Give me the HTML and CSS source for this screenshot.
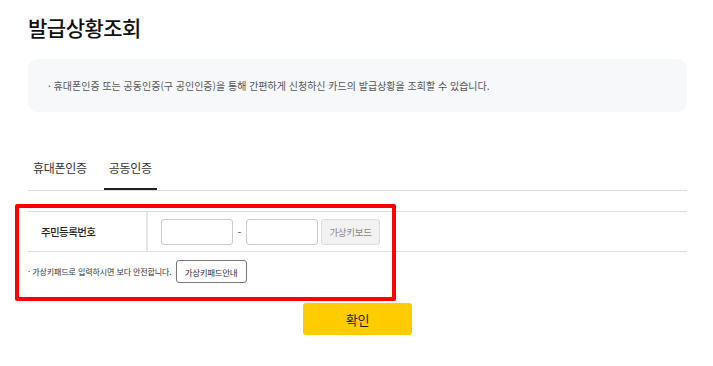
FILE: index.html
```html
<!DOCTYPE html>
<html lang="ko">
<head>
  <meta charset="UTF-8" />
  <meta name="viewport" content="width=device-width, initial-scale=1" />
  <title>발급상황조회</title>
  <link rel="stylesheet" href="styles.css">
</head>
<body>

  <main class="page">
    <h1 class="page-title">발급상황조회</h1>

    <div class="notice">
      <p>· 휴대폰인증 또는 공동인증(구 공인인증)을 통해 간편하게 신청하신 카드의 발급상황을 조회할 수 있습니다.</p>
    </div>

    <nav class="tabs">
      <a class="tab" href="#">휴대폰인증</a>
      <a class="tab active" href="#">공동인증</a>
    </nav>

    <!-- resident number form, marked with the red box -->
    <section class="cert-form">
      <div class="form-row">
        <div class="form-label">주민등록번호</div>
        <div class="form-field">
          <input class="num-input" type="text" aria-label="주민등록번호 앞자리" />
          <span class="dash">-</span>
          <input class="num-input" type="password" aria-label="주민등록번호 뒷자리" />
          <button class="keyboard-btn" type="button">가상키보드</button>
        </div>
      </div>
      <div class="hint-row">
        <span class="hint">· 가상키패드로 입력하시면 보다 안전합니다.</span>
        <button class="guide-btn" type="button">가상키패드안내</button>
      </div>
      <div class="highlight"></div>
    </section>

    <div class="actions">
      <button class="confirm-btn" type="button">확인</button>
    </div>
  </main>

</body>
</html>
```

FILE: styles.css
```css
body {
  margin: 0;
  background: #fff;
  color: #222;
  font-family: "Noto Sans CJK KR", "Noto Sans", sans-serif;
}

.page {
  padding: 13px 26px 0 28px;
}

.page-title {
  margin: 0;
  font-size: 21px;
  font-weight: 500;
  letter-spacing: -0.5px;
  line-height: 28px;
  color: #111;
}

.notice {
  margin-top: 18px;
  height: 53px;
  background: #f7f8fa;
  border-radius: 9px;
  display: flex;
  align-items: center;
  padding: 0 20px;
}

.notice p {
  margin: 0;
  font-size: 10px;
  color: #555;
  letter-spacing: 0;
}

.tabs {
  margin-top: 43px;
  display: flex;
  gap: 12px;
  border-bottom: 1px solid #ddd;
}

.tab {
  display: block;
  padding: 4px 5px 12px;
  font-size: 12px;
  letter-spacing: -0.3px;
  color: #333;
  text-decoration: none;
  border-bottom: 2px solid transparent;
}

.tab.active {
  border-bottom-color: #222;
}

/* form block */
.cert-form {
  position: relative;
  margin-top: 20px;
  border-top: 1px solid #ddd;
}

.form-row {
  display: flex;
  height: 39px;
  border-bottom: 1px solid #ddd;
}

.form-label {
  width: 105px;
  padding-left: 13px;
  border-right: 2px solid #e6e6e6;
  display: flex;
  align-items: center;
  font-size: 10.5px;
  font-weight: 500;
  letter-spacing: -0.6px;
  color: #222;
}

.form-field {
  display: flex;
  align-items: center;
  padding-left: 13px;
}

.num-input {
  width: 72px;
  height: 26px;
  box-sizing: border-box;
  border: 1px solid #ccc;
  border-radius: 3px;
  background: #fff;
}

.dash {
  width: 13px;
  text-align: center;
  font-size: 11px;
  color: #555;
}

.keyboard-btn {
  margin-left: 3px;
  width: 59px;
  height: 26px;
  border: 1px solid #ddd;
  border-radius: 3px;
  background: #f2f2f2;
  color: #888;
  font-family: inherit;
  font-size: 9.5px;
  letter-spacing: -0.3px;
  padding: 0;
}

.hint-row {
  display: flex;
  align-items: center;
  gap: 4px;
  padding-top: 8px;
  height: 23px;
}

.hint {
  font-size: 8px;
  letter-spacing: -0.1px;
  color: #333;
}

.guide-btn {
  width: 71px;
  height: 23px;
  border: 1px solid #777;
  border-radius: 3px;
  background: #fff;
  color: #333;
  font-family: inherit;
  font-size: 8.5px;
  letter-spacing: -0.3px;
  padding: 0;
}

.highlight {
  position: absolute;
  left: -13px;
  top: -8px;
  width: 381px;
  height: 97px;
  box-sizing: border-box;
  border: 4px solid #f00;
  border-radius: 2px;
  pointer-events: none;
}

.actions {
  display: flex;
  justify-content: center;
  margin-top: 20px;
}

.confirm-btn {
  width: 109px;
  height: 32px;
  border: none;
  border-radius: 3px;
  background: #fc0;
  color: #222;
  font-family: inherit;
  font-size: 13px;
  letter-spacing: -0.3px;
}
```
